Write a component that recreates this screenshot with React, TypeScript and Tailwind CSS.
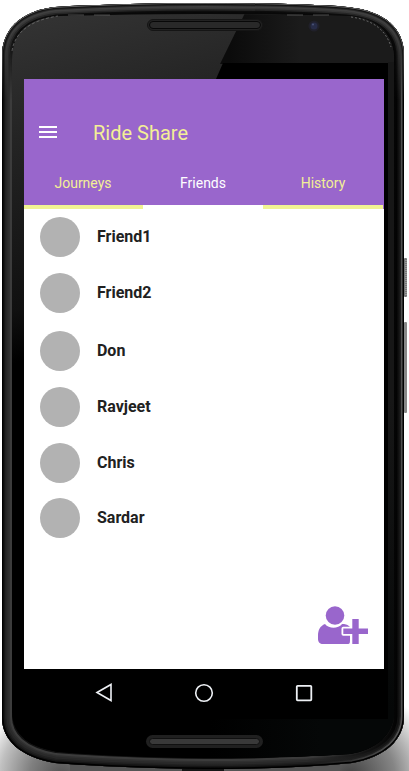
const friends = [
  { name: "Friend1", gap: "mt-0" },
  { name: "Friend2", gap: "mt-4" },
  { name: "Don", gap: "mt-[18px]" },
  { name: "Ravjeet", gap: "mt-4" },
  { name: "Chris", gap: "mt-4" },
  { name: "Sardar", gap: "mt-[15px]" },
];

const BODY =
  "M2 56 C2 30 20 11 55 7 Q130 3 205 3 Q290 3 347 7 C385 11 404 28 404 56 V716 C404 740 385 757 352 763 Q290 769 205 769 Q120 768 55 763 C20 757 2 740 2 717 Z";
const FACE =
  "M12 60 C12 32 28 18 60 16 Q205 12 347 16 C378 18 394 34 394 60 V712 C394 735 375 750 350 754 Q290 758 205 758 Q120 757 60 752 C30 748 12 735 12 712 Z";

// Bezel shading, widest band first. Each colour pair is left edge, right edge.
const bands = [
  { id: "band1", width: 20, left: "#3c3c3c", right: "#030303" },
  { id: "band2", width: 16, left: "#303030", right: "#030303" },
  { id: "band3", width: 13, left: "#292929", right: "#101010" },
  { id: "band4", width: 9, left: "#202020", right: "#1f1f1f" },
  { id: "band5", width: 6, left: "#151515", right: "#505050" },
  { id: "band6", width: 3, left: "#000", right: "#000" },
];
const topBands = [
  { width: 22, color: "#080808" },
  { width: 18, color: "#0c0c0c" },
  { width: 15, color: "#252525" },
  { width: 12, color: "#373737" },
  { width: 9, color: "#404040" },
  { width: 6, color: "#282828" },
  { width: 4, color: "#141414" },
  { width: 1.5, color: "#777" },
];

function PhoneFrame() {
  return (
    <svg className="absolute inset-0 -z-10" width="409" height="771" viewBox="0 0 409 771" aria-hidden="true">
      <defs>
        {bands.map(({ id, left, right }) => (
          <linearGradient key={id} id={id} x1="0" x2="409" y1="0" y2="0" gradientUnits="userSpaceOnUse">
            <stop offset="0" stopColor={left} />
            <stop offset="0.75" stopColor={left} />
            <stop offset="0.97" stopColor={right} />
          </linearGradient>
        ))}
        <linearGradient id="fade" x1="0" x2="0" y1="30" y2="100" gradientUnits="userSpaceOnUse">
          <stop offset="0" stopColor="#fff" />
          <stop offset="1" stopColor="#000" />
        </linearGradient>
        <mask id="topMask" maskUnits="userSpaceOnUse" x="0" y="0" width="409" height="110">
          <rect width="409" height="110" fill="url(#fade)" />
        </mask>
        <linearGradient id="face" x1="12" x2="100" y1="16" y2="340" gradientUnits="userSpaceOnUse">
          <stop offset="0" stopColor="#343434" />
          <stop offset="0.35" stopColor="#242424" />
          <stop offset="0.85" stopColor="#101010" />
          <stop offset="1" stopColor="#000" />
        </linearGradient>
        <linearGradient id="dark" x1="230" x2="300" y1="0" y2="0" gradientUnits="userSpaceOnUse">
          <stop offset="0" stopColor="#0b0b0b" />
          <stop offset="1" stopColor="#1b1b1b" />
        </linearGradient>
        <linearGradient id="chin" x1="210" x2="320" y1="0" y2="0" gradientUnits="userSpaceOnUse">
          <stop offset="0" stopColor="#000" />
          <stop offset="1" stopColor="#050707" />
        </linearGradient>
        <linearGradient id="sideFade" x1="0" x2="0" y1="400" y2="710" gradientUnits="userSpaceOnUse">
          <stop offset="0" stopColor="#171717" />
          <stop offset="1" stopColor="#050707" />
        </linearGradient>
        <radialGradient id="shadowLeft" cx="62" cy="777" r="82" gradientUnits="userSpaceOnUse">
          <stop offset="0" stopColor="#505050" />
          <stop offset="0.4" stopColor="#808080" />
          <stop offset="0.75" stopColor="#c0c0c0" />
          <stop offset="1" stopColor="#fff" />
        </radialGradient>
        <radialGradient id="shadowRight" cx="350" cy="777" r="90" gradientUnits="userSpaceOnUse">
          <stop offset="0" stopColor="#404040" />
          <stop offset="0.5" stopColor="#858585" />
          <stop offset="1" stopColor="#fff" />
        </radialGradient>
        <clipPath id="faceClip"><path d={FACE} /></clipPath>
        <clipPath id="bodyClip"><path d={BODY} /></clipPath>
      </defs>
      <rect width="205" height="101" y="670" fill="url(#shadowLeft)" />
      <rect x="205" width="204" height="101" y="670" fill="url(#shadowRight)" />
      <path d="M70 764 H340 V771 H70 Z" fill="#555" />
      <rect x="182" y="768" width="42" height="3" fill="#161616" />
      <rect x="404" y="258" width="3" height="39" rx="1" fill="#777" />
      <path d="M406 260 V296" stroke="#bbb" strokeWidth="1" strokeDasharray="1 1" />
      <rect x="404" y="322" width="3" height="91" rx="1" fill="#888" />
      <path d={BODY} fill="#111" />
      <g clipPath="url(#bodyClip)" fill="none">
        {bands.map(({ id, width }) => (
          <path key={id} d={BODY} stroke={`url(#${id})`} strokeWidth={width} />
        ))}
        <g mask="url(#topMask)">
          {topBands.map(({ width, color }) => (
            <path key={width} d={BODY} stroke={color} strokeWidth={width} />
          ))}
        </g>
      </g>
      <path d={FACE} fill="url(#face)" />
      <g clipPath="url(#faceClip)">
        <path d="M245 13 H400 V64 H220 Z" fill="url(#dark)" />
        <rect x="388" y="62" width="12" height="710" fill="url(#sideFade)" />
        <path d="M223 63 H388 V360 H24 V79 H216 Z" fill="#000" />
        <rect x="24" y="330" width="364" height="430" fill="#000" />
        <path d="M210 719 H388 V710 H400 V760 H210 Z" fill="url(#chin)" />
      </g>
      <path d="M12 51 C15 31 32 20 58 16" fill="none" stroke="#777" strokeWidth=".7" strokeDasharray="3 2" />
      <path d="M68 15 H120 M287 15 H334" stroke="#777" strokeWidth=".6" strokeDasharray="16 10" />
      <path d="M351 17 C373 20 386 30 391 47" fill="none" stroke="#777" strokeWidth=".8" strokeDasharray="2 2" />
      <rect x="147.5" y="19.5" width="115" height="11" rx="5.5" fill="#222" stroke="#151515" />
      <rect x="149.5" y="21.5" width="111" height="7" rx="3.5" fill="#292929" stroke="#080808" />
      <rect x="146" y="735" width="117" height="13" rx="6.5" fill="#202020" />
      <rect x="149.5" y="738.5" width="110" height="6" rx="3" fill="#393939" stroke="#111" />
      <circle cx="314" cy="26" r="5.5" fill="#20202a" />
      <circle cx="314" cy="26" r="3.5" fill="#272c48" />
      <circle cx="313" cy="24.5" r="1" fill="#4a5277" />
    </svg>
  );
}

function AddFriendIcon() {
  return (
    <svg width="52" height="40" viewBox="0 0 52 40" fill="#9966cc">
      <path d="M8 19 C3 21 1 25 1 31 V34 C1 37 3 39 6 39 H31 C33 39 33 37 33 34 V22 C30 19 28 19 25 19 C21 24 12 24 8 19 Z" />
      <circle cx="18" cy="11" r="10.5" fill="#fff" />
      <circle cx="18" cy="10.5" r="9.3" />
      <path d="M35.3 14 H41.7 V23.5 H51 V29 H41.7 V39 H35.3 V29 H26.3 V23.5 H35.3 Z" fill="#fff" stroke="#fff" strokeWidth="3.6" strokeLinejoin="round" />
      <path d="M35.3 14 H41.7 V23.5 H51 V29 H41.7 V39 H35.3 V29 H26.3 V23.5 H35.3 Z" />
    </svg>
  );
}

export default function App() {
  return (
    <div className="relative isolate h-[771px] w-[409px] overflow-hidden bg-white pt-[79px] font-['Roboto',sans-serif]">
      <PhoneFrame />
      <main className="ml-6 flex h-[590px] w-[360px] flex-col bg-white">
        <header className="h-[126px] shrink-0 bg-[#9966cc] pt-[38px]">
          <div className="flex h-8 items-center">
            <button className="mb-0.5 ml-[15px] flex w-[18px] flex-col gap-[3px]" aria-label="Menu">
              <span className="h-0.5 w-full bg-white" />
              <span className="h-0.5 w-full bg-white" />
              <span className="h-0.5 w-full bg-white" />
            </button>
            <h1 className="ml-9 text-[20px] leading-8 text-[#f3ef96]">Ride Share</h1>
          </div>
          <nav className="mt-6 grid grid-cols-3 text-center text-sm leading-5 text-[#f3ef96]">
            <span className="pr-0.5">Journeys</span>
            <span className="pr-0.5 text-white">Friends</span>
            <span className="pr-0.5">History</span>
          </nav>
        </header>
        <div className="flex h-1 shrink-0 justify-between">
          <span className="w-[119px] bg-[#f1f293]" />
          <span className="w-[121px] border-r border-[#9966cc] bg-[#f1f293]" />
        </div>
        <ul className="mt-2 shrink-0 pl-4">
          {friends.map(({ name, gap }) => (
            <li key={name} className={`${gap} flex h-10 items-center`}>
              <span className="ml-[0.4px] size-[39.2px] rounded-full bg-[#b2b2b2]" />
              <span className="ml-[17.4px] text-base font-bold leading-6 text-[#212121]">{name}</span>
            </li>
          ))}
        </ul>
        <button className="mr-[15px] mb-6 mt-auto self-end" aria-label="Add friend">
          <AddFriendIcon />
        </button>
      </main>
      <nav className="flex pl-[94px] pt-[13px]" aria-label="Device navigation">
        <svg width="20" height="22" viewBox="0 0 20 22" fill="none" stroke="#eef1f5" strokeWidth="1.6"><path d="M3 10.5 L17 2.5 V18.5 Z" /></svg>
        <svg className="ml-20" width="20" height="22" viewBox="0 0 20 22" fill="none" stroke="#eef1f5" strokeWidth="1.6"><circle cx="10" cy="11" r="8.3" /></svg>
        <svg className="ml-20" width="20" height="22" viewBox="0 0 20 22" fill="none" stroke="#eef1f5" strokeWidth="1.8"><rect x="2.8" y="3.8" width="14.5" height="14.5" rx=".8" /></svg>
      </nav>
    </div>
  );
}
